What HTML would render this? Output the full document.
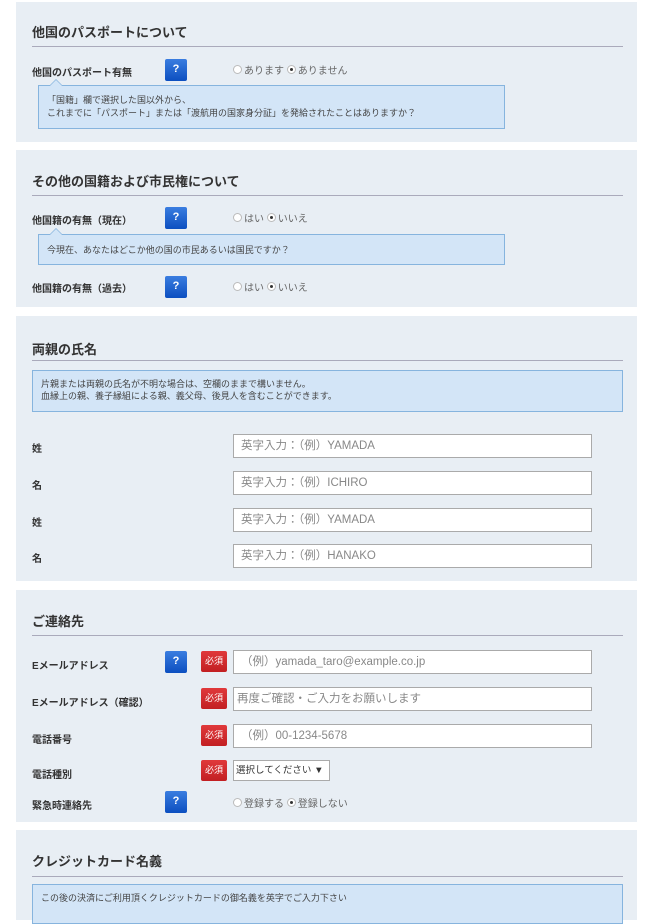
<!DOCTYPE html>
<html><head><meta charset="utf-8"><style>
body{margin:0;background:#fff;font-family:"Liberation Sans","Noto Sans CJK JP",sans-serif;color:#333;width:669px;height:912px;overflow:hidden;position:relative}
.p{position:absolute;left:16px;width:621px;background:#e8eef4}
.h{position:absolute;left:16px;font-size:13px;font-weight:bold;color:#333}
.ln{position:absolute;left:16px;width:591px;height:1px;background:#aab}
.lb{position:absolute;left:16px;font-size:10px;font-weight:bold;color:#333}
.q{position:absolute;left:149px;width:22px;height:22px;background:linear-gradient(#3a7de0,#0c4fc0);border-radius:2px;color:#fff;font-size:11px;font-weight:bold;text-align:center;line-height:21px}
.r{position:absolute;left:217px;font-size:10px;color:#666}
.rd{display:inline-block;width:7px;height:7px;border:1px solid #bbb;border-radius:50%;background:#fff;vertical-align:0;margin-right:2px;position:relative}
.rd.on:after{content:"";position:absolute;left:2px;top:2px;width:3px;height:3px;border-radius:50%;background:#333}
.tip{position:absolute;left:22px;width:467px;background:#d3e5f7;border:1px solid #86b4de;font-size:9px;color:#444;padding:7px 8px;box-sizing:border-box;line-height:13px}
.tip:before{content:"";position:absolute;left:10px;top:-7px;border:7px solid transparent;border-top:0;border-bottom-color:#86b4de}
.tip:after{content:"";position:absolute;left:11px;top:-6px;border:6px solid transparent;border-top:0;border-bottom-color:#d3e5f7}
.in{position:absolute;left:217px;width:359px;height:24px;background:#fff;border:1px solid #aaa;box-sizing:border-box;font-size:11.5px;color:#888;padding-left:7px;line-height:22px}
.req{position:absolute;left:185px;width:26px;height:21px;background:linear-gradient(#e0393b,#c21f22);border-radius:2px;color:#fff;font-size:9px;text-align:center;line-height:21px}
.box{position:absolute;left:16px;width:591px;background:#d3e5f7;border:1px solid #86b4de;box-sizing:border-box;font-size:9px;color:#444;padding:7px 8px;line-height:12px}
</style></head><body>

<div class="p" style="top:2px;height:140px">
<div class="h" style="top:20px">他国のパスポートについて</div>
<div class="ln" style="top:44px"></div>
<div class="lb" style="top:62px">他国のパスポート有無</div>
<div class="q" style="top:57px">?</div>
<div class="r" style="top:60px"><span class="rd"></span>あります <span class="rd on"></span>ありません</div>
<div class="tip" style="top:83px;height:44px;padding-top:8px">「国籍」欄で選択した国以外から、<br>これまでに「パスポート」または「渡航用の国家身分証」を発給されたことはありますか？</div>
</div>

<div class="p" style="top:150px;height:157px">
<div class="h" style="top:21px">その他の国籍および市民権について</div>
<div class="ln" style="top:45px"></div>
<div class="lb" style="top:62px">他国籍の有無（現在）</div>
<div class="q" style="top:57px">?</div>
<div class="r" style="top:60px"><span class="rd"></span>はい <span class="rd on"></span>いいえ</div>
<div class="tip" style="top:84px;height:31px;padding-top:9px">今現在、あなたはどこか他の国の市民あるいは国民ですか？</div>
<div class="lb" style="top:130px">他国籍の有無（過去）</div>
<div class="q" style="top:126px">?</div>
<div class="r" style="top:129px"><span class="rd"></span>はい <span class="rd on"></span>いいえ</div>
</div>

<div class="p" style="top:316px;height:265px">
<div class="h" style="top:23px">両親の氏名</div>
<div class="ln" style="top:44px"></div>
<div class="box" style="top:54px;height:42px">片親または両親の氏名が不明な場合は、空欄のままで構いません。<br>血縁上の親、養子縁組による親、義父母、後見人を含むことができます。</div>
<div class="lb" style="top:124px">姓</div><div class="in" style="top:118px">英字入力：（例）YAMADA</div>
<div class="lb" style="top:161px">名</div><div class="in" style="top:155px">英字入力：（例）ICHIRO</div>
<div class="lb" style="top:198px">姓</div><div class="in" style="top:192px">英字入力：（例）YAMADA</div>
<div class="lb" style="top:234px">名</div><div class="in" style="top:228px">英字入力：（例）HANAKO</div>
</div>

<div class="p" style="top:590px;height:232px">
<div class="h" style="top:21px">ご連絡先</div>
<div class="ln" style="top:45px"></div>
<div class="lb" style="top:67px">Eメールアドレス</div>
<div class="q" style="top:61px">?</div><div class="req" style="top:61px">必須</div>
<div class="in" style="top:60px">（例）yamada_taro@example.co.jp</div>
<div class="lb" style="top:104px">Eメールアドレス（確認）</div>
<div class="req" style="top:98px">必須</div>
<div class="in" style="top:97px;padding-left:3px">再度ご確認・ご入力をお願いします</div>
<div class="lb" style="top:141px">電話番号</div>
<div class="req" style="top:135px">必須</div>
<div class="in" style="top:134px">（例）00-1234-5678</div>
<div class="lb" style="top:176px">電話種別</div>
<div class="req" style="top:170px">必須</div>
<div class="in" style="top:170px;width:97px;height:21px;font-size:9.5px;color:#333;line-height:19px;padding-left:2px">選択してください ▼</div>
<div class="lb" style="top:207px">緊急時連絡先</div>
<div class="q" style="top:201px">?</div>
<div class="r" style="top:205px"><span class="rd"></span>登録する <span class="rd on"></span>登録しない</div>
</div>

<div class="p" style="top:830px;height:90px">
<div class="h" style="top:21px">クレジットカード名義</div>
<div class="ln" style="top:46px"></div>
<div class="box" style="top:54px;height:40px">この後の決済にご利用頂くクレジットカードの御名義を英字でご入力下さい</div>
</div>
</body></html>
